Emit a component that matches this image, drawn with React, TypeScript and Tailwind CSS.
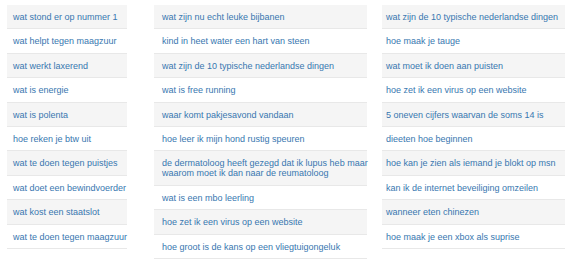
const columns: { items: string[][]; width: string; pad: string }[] = [
  {
    width: 'w-[120px]',
    pad: 'pl-[6px]',
    items: [
      ['wat stond er op nummer 1'],
      ['wat helpt tegen maagzuur'],
      ['wat werkt laxerend'],
      ['wat is energie'],
      ['wat is polenta'],
      ['hoe reken je btw uit'],
      ['wat te doen tegen puistjes'],
      ['wat doet een bewindvoerder'],
      ['wat kost een staatslot'],
      ['wat te doen tegen maagzuur'],
    ],
  },
  {
    width: 'w-[213px]',
    pad: 'pl-[8px]',
    items: [
      ['wat zijn nu echt leuke bijbanen'],
      ['kind in heet water een hart van steen'],
      ['wat zijn de 10 typische nederlandse dingen'],
      ['wat is free running'],
      ['waar komt pakjesavond vandaan'],
      ['hoe leer ik mijn hond rustig speuren'],
      ['de dermatoloog heeft gezegd dat ik lupus heb maar', 'waarom moet ik dan naar de reumatoloog'],
      ['wat is een mbo leerling'],
      ['hoe zet ik een virus op een website'],
      ['hoe groot is de kans op een vliegtuigongeluk'],
    ],
  },
  {
    width: 'w-[183px]',
    pad: 'pl-[4px]',
    items: [
      ['wat zijn de 10 typische nederlandse dingen'],
      ['hoe maak je tauge'],
      ['wat moet ik doen aan puisten'],
      ['hoe zet ik een virus op een website'],
      ['5 oneven cijfers waarvan de soms 14 is'],
      ['dieeten hoe beginnen'],
      ['hoe kan je zien als iemand je blokt op msn'],
      ['kan ik de internet beveiliging omzeilen'],
      ['wanneer eten chinezen'],
      ['hoe maak je een xbox als suprise'],
    ],
  },
]

export default function App() {
  return (
    <div className="flex w-[567px] h-[263px] bg-white pt-[5px] pl-[7px] font-['Liberation_Sans',Arial,sans-serif] text-[9px] text-[#3877b0]">
      {columns.map((col, ci) => (
        <ul key={ci} className={`${col.width} ${ci === 1 ? 'ml-[27px]' : ci === 2 ? 'ml-[15px]' : ''} flex flex-col`}>
          {col.items.map((lines, i) => (
            <li
              key={i}
              className={`${col.pad} pt-[7px] pb-[6.4px] leading-[10px] border-b border-[#e8e8e8] whitespace-nowrap ${
                i % 2 === 0 ? 'bg-[#f5f5f5]' : 'bg-white'
              }`}
            >
              {lines.map((l, li) => (
                <div key={li}>{l}</div>
              ))}
            </li>
          ))}
        </ul>
      ))}
    </div>
  )
}
